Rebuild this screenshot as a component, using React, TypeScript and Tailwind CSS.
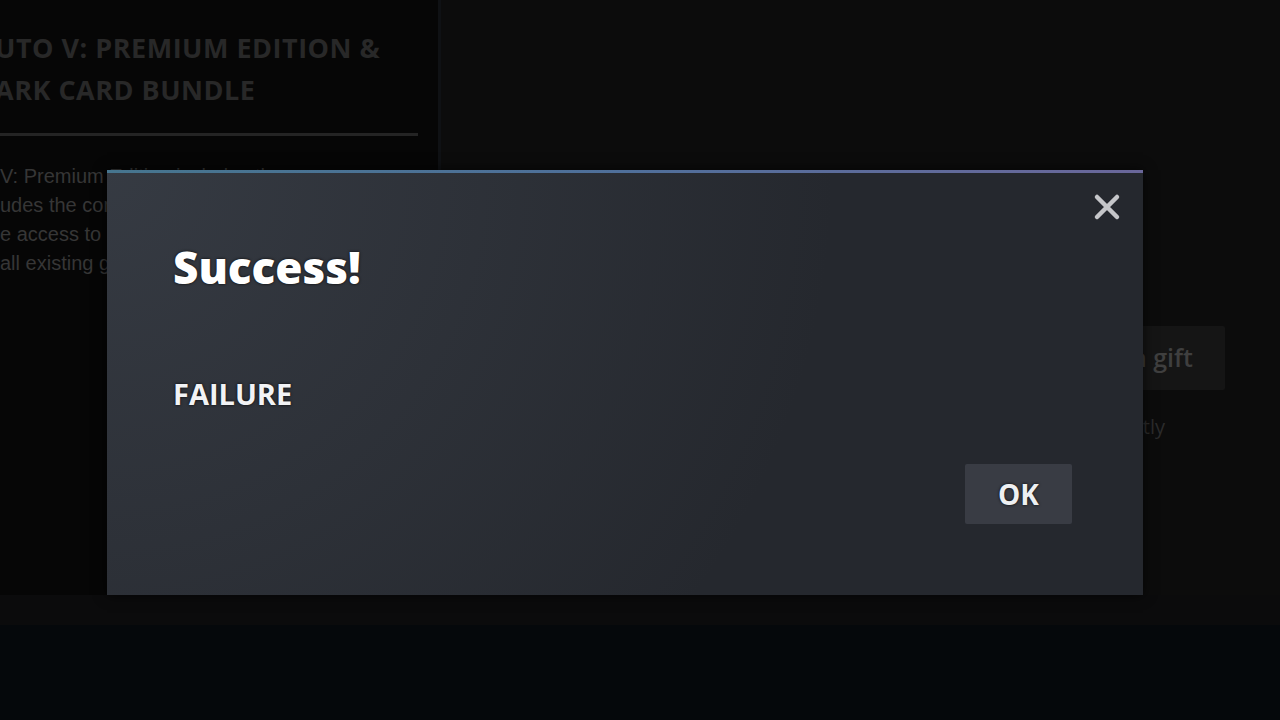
import React from "react";

const font = { fontFamily: '"Open Sans", "Liberation Sans", Arial, sans-serif' };

function CloseIcon() {
  return (
    <svg width="28" height="28" viewBox="0 0 28 28" fill="none">
      <path
        d="M4 4 L24 24 M24 4 L4 24"
        stroke="#c5c6c9"
        strokeWidth="4.5"
        strokeLinecap="round"
      />
    </svg>
  );
}

function StorePage() {
  return (
    <div className="flex h-[720px] w-full flex-col bg-[#05080b]">
      <div className="flex h-[595px] w-full">
        {/* bundle info column */}
        <div className="flex w-[441px] flex-col overflow-hidden border-r-[3px] border-[#0f1114] bg-[#060606]">
          <div className="-ml-[5px] mt-[27px] whitespace-nowrap text-[27px] font-bold uppercase leading-[42px] tracking-[0.5px] text-[#282828]">
            <div>uto V: Premium Edition &amp;</div>
            <div>ark Card Bundle</div>
          </div>
          <div className="mr-[20px] mt-[22px] h-[3px] bg-[#242424]" />
          <div
            className="mt-[26px] whitespace-nowrap text-[20px] leading-[29px] text-[#363636]"
            style={{ fontFamily: '"Liberation Sans", Arial, sans-serif' }}
          >
            <div>V: Premium Edition includes the</div>
            <div>udes the complete story mode</div>
            <div>e access to GTA Online and</div>
            <div>all existing gameplay upgrades</div>
          </div>
        </div>

        {/* purchase column */}
        <div className="flex flex-1 flex-col items-end bg-[#0c0c0c] pr-[55px] pt-[326px]">
          <div className="flex h-[64px] items-center rounded-[2px] bg-[#151515] pl-[24px] pr-[32px] text-[25px] font-semibold text-[#3f3f3f]">
            Purchase as a gift
          </div>
          <div className="mr-[60px] mt-[22px] text-[20px] text-[#2b2b2b]">
            Redeem instantly
          </div>
        </div>
      </div>
      <div className="h-[30px] bg-[#0b0b0c]" />
    </div>
  );
}

function MessageDialog() {
  return (
    <div className="absolute left-[107px] top-[170px] flex h-[425px] w-[1036px] flex-col overflow-hidden bg-[#25282e] bg-[radial-gradient(circle_at_top_left,rgba(74,81,92,0.45)_0%,rgba(75,81,92,0)_65%)] shadow-[0_0_12px_rgba(0,0,0,0.7)]">
      <div className="h-[3px] w-full bg-gradient-to-r from-[#46758e] via-[#4f6f9a] to-[#6a679a]" />
      <button className="absolute right-[22px] top-[23px]">
        <CloseIcon />
      </button>
      <div className="flex flex-1 flex-col pl-[66px] pr-[71px] pt-[72px]">
        <h1 className="text-[44px] font-extrabold leading-none text-white [text-shadow:0_0_3px_rgba(0,0,0,0.9)]">
          Success!
        </h1>
        <p className="mt-[90px] text-[29px] font-bold leading-none text-[#f2f3f5] [text-shadow:0_0_3px_rgba(0,0,0,0.9)]">
          FAILURE
        </p>
        <div className="mt-[56px] flex justify-end">
          <button className="flex h-[60px] w-[107px] items-center justify-center rounded-[2px] bg-[#393c44] text-[28px] font-bold text-[#eef0f2] [text-shadow:0_0_3px_rgba(0,0,0,0.9)]">
            OK
          </button>
        </div>
      </div>
    </div>
  );
}

export default function App() {
  return (
    <div className="relative h-[720px] w-full overflow-hidden" style={font}>
      <StorePage />
      <MessageDialog />
    </div>
  );
}
